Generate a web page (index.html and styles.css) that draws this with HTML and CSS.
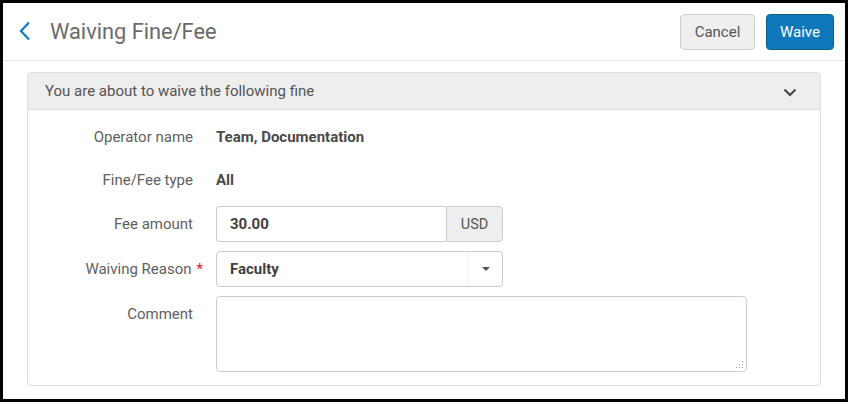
FILE: index.html
```html
<!DOCTYPE html>
<html>
<head>
<meta charset="utf-8">
<link rel="stylesheet" href="styles.css">
</head>
<body>
<div class="frame">
  <header class="topbar">
    <div class="title-wrap">
      <svg class="back" width="14" height="20" viewBox="0 0 14 20"><path d="M11 1.5 L3 10 L11 18.5" fill="none" stroke="#1a7dc2" stroke-width="2.4" stroke-linecap="butt" stroke-linejoin="miter"/></svg>
      <h1 class="title">Waiving Fine/Fee</h1>
    </div>
    <div class="actions">
      <button class="btn btn-default">Cancel</button>
      <button class="btn btn-primary">Waive</button>
    </div>
  </header>
  <section class="panel">
    <div class="panel-head">
      <span>You are about to waive the following fine</span>
      <svg class="chev" width="14" height="9" viewBox="0 0 14 9"><path d="M1.5 1.5 L7 7 L12.5 1.5" fill="none" stroke="#444" stroke-width="2"/></svg>
    </div>
    <div class="panel-body">
      <div class="row static">
        <div class="label">Operator name</div>
        <div class="value">Team, Documentation</div>
      </div>
      <div class="row static">
        <div class="label">Fine/Fee type</div>
        <div class="value">All</div>
      </div>
      <div class="row">
        <div class="label">Fee amount</div>
        <div class="input-group">
          <div class="input">30.00</div>
          <div class="addon">USD</div>
        </div>
      </div>
      <div class="row">
        <div class="label">Waiving Reason<span class="req">*</span></div>
        <div class="select">
          <div class="select-val">Faculty</div>
          <div class="select-arrow"><span class="caret"></span></div>
        </div>
      </div>
      <div class="row top">
        <div class="label label-top">Comment</div>
        <div class="textarea-wrap">
          <textarea class="textarea"></textarea>
          <svg class="grip" width="9" height="9" viewBox="0 0 9 9">
            <rect x="7" y="1" width="1" height="1" fill="#a0a0a0"/>
            <rect x="7" y="4" width="1" height="1" fill="#a0a0a0"/>
            <rect x="4" y="4" width="1" height="1" fill="#a0a0a0"/>
            <rect x="7" y="7" width="1" height="1" fill="#a0a0a0"/>
            <rect x="4" y="7" width="1" height="1" fill="#a0a0a0"/>
            <rect x="1" y="7" width="1" height="1" fill="#a0a0a0"/>
          </svg>
        </div>
      </div>
    </div>
  </section>
</div>
</body>
</html>
```
FILE: styles.css
```css
* { box-sizing: border-box; }
html, body { margin: 0; padding: 0; background: #000; }
body { font-family: Roboto, "Liberation Sans", Arial, sans-serif; }
.frame {
  margin: 3px;
  width: 842px;
  height: 396px;
  background: #fff;
  overflow: hidden;
}
.topbar {
  height: 58px;
  border-bottom: 1px solid #e3e3e3;
  display: flex;
  align-items: center;
  justify-content: space-between;
  padding: 0 11px 0 15px;
}
.title-wrap { display: flex; align-items: center; }
.back { display: block; margin-right: 18px; }
.title {
  margin: 0;
  font-size: 21.8px;
  font-weight: 400;
  color: #6b6b6b;
  line-height: 1;
}
.actions { display: flex; gap: 11px; }
.btn {
  height: 36px;
  font-family: Roboto, "Liberation Sans", Arial, sans-serif;
  font-size: 15px;
  border-radius: 4px;
  padding: 0;
  cursor: pointer;
}
.btn-default {
  width: 75px;
  background: #efefef;
  border: 1px solid #cfcfcf;
  color: #555;
}
.btn-primary {
  width: 68px;
  background: #0f78ba;
  border: 1px solid #0b5d92;
  color: #fff;
}
.panel {
  margin: 11px 24px 0 24px;
  border: 1px solid #dedede;
  border-radius: 4px;
  height: 314px;
}
.panel-head {
  height: 37px;
  background: #eeeeee;
  border-bottom: 1px solid #dcdcdc;
  border-radius: 4px 4px 0 0;
  display: flex;
  align-items: center;
  justify-content: space-between;
  padding: 0 23px 0 17px;
  font-size: 15px;
  color: #555;
}
.chev { display: block; margin-top: 2px; }
.panel-body {
  padding-top: 10px;
  display: flex;
  flex-direction: column;
  gap: 9px;
}
.row {
  display: flex;
  align-items: center;
  gap: 23px;
}
.row.static { height: 34px; }
.row.top { align-items: flex-start; }
.label {
  width: 165px;
  text-align: right;
  font-size: 15px;
  color: #5f5f5f;
}
.label-top { padding-top: 9px; }
.req {
  color: #e02020;
  margin-left: 5px;
  margin-right: -10px;
}
.value {
  font-size: 15px;
  font-weight: 700;
  color: #4a4a4a;
}
.input-group {
  display: flex;
  width: 287px;
  height: 36px;
}
.input {
  flex: 1;
  border: 1px solid #cccccc;
  border-right: none;
  border-radius: 4px 0 0 4px;
  padding-left: 13px;
  display: flex;
  align-items: center;
  font-size: 15px;
  font-weight: 700;
  color: #3f3f3f;
}
.addon {
  width: 57px;
  background: #eeeeee;
  border: 1px solid #cccccc;
  border-radius: 0 4px 4px 0;
  display: flex;
  align-items: center;
  justify-content: center;
  font-size: 14.5px;
  color: #555;
}
.select {
  width: 287px;
  height: 36px;
  border: 1px solid #cccccc;
  border-radius: 4px;
  display: flex;
}
.select-val {
  flex: 1;
  padding-left: 13px;
  display: flex;
  align-items: center;
  font-size: 15px;
  font-weight: 700;
  color: #3f3f3f;
}
.select-arrow {
  width: 34px;
  border-left: 1px solid #f0f0f0;
  display: flex;
  align-items: center;
  justify-content: center;
}
.caret {
  width: 0;
  height: 0;
  border-left: 4px solid transparent;
  border-right: 4px solid transparent;
  border-top: 4px solid #555;
}
.textarea-wrap {
  position: relative;
  width: 531px;
  height: 76px;
}
.textarea {
  display: block;
  width: 100%;
  height: 100%;
  border: 1px solid #cccccc;
  border-radius: 4px;
  margin: 0;
  resize: none;
  font-family: Roboto, "Liberation Sans", Arial, sans-serif;
}
.grip {
  position: absolute;
  right: 3px;
  bottom: 3px;
  display: block;
}
```
